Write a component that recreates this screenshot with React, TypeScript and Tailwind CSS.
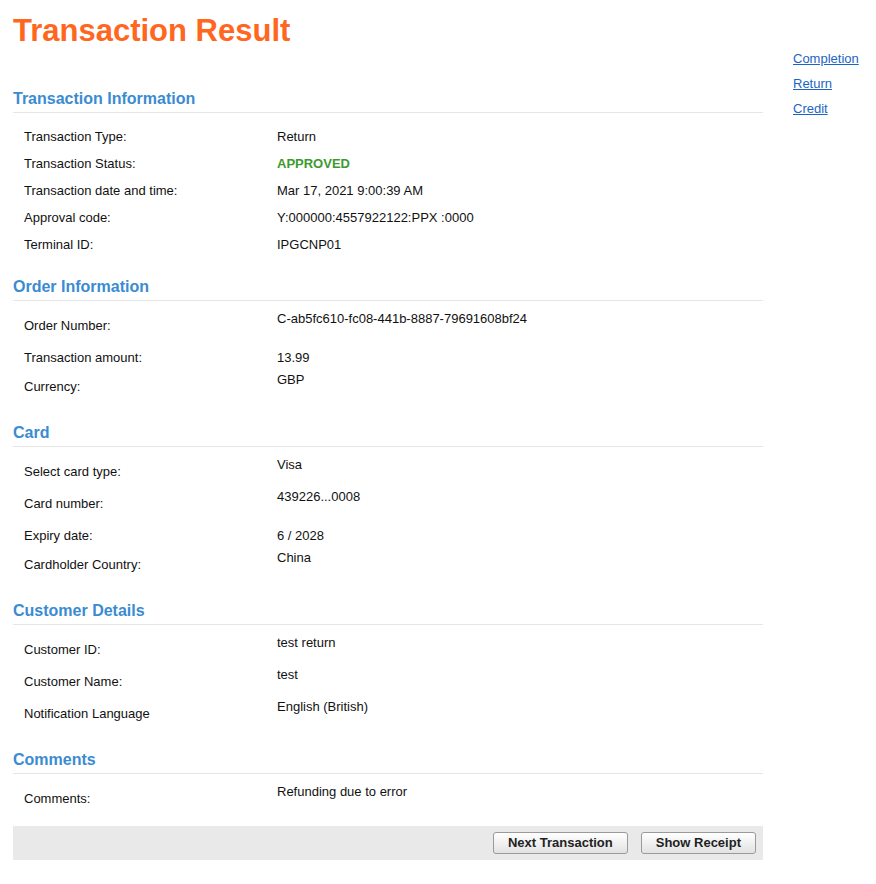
import React from 'react';

type Row = {
  label: string;
  value: string;
  tall?: boolean;
  status?: boolean;
};

interface Section {
  title: string;
  compact?: boolean;
  rows: Row[];
}

const sections: Section[] = [
  {
    title: 'Transaction Information',
    compact: true,
    rows: [
      { label: 'Transaction Type:', value: 'Return' },
      { label: 'Transaction Status:', value: 'APPROVED', status: true },
      { label: 'Transaction date and time:', value: 'Mar 17, 2021 9:00:39 AM' },
      { label: 'Approval code:', value: 'Y:000000:4557922122:PPX :0000' },
      { label: 'Terminal ID:', value: 'IPGCNP01' },
    ],
  },
  {
    title: 'Order Information',
    rows: [
      { label: 'Order Number:', value: 'C-ab5fc610-fc08-441b-8887-79691608bf24', tall: true },
      { label: 'Transaction amount:', value: '13.99' },
      { label: 'Currency:', value: 'GBP', tall: true },
    ],
  },
  {
    title: 'Card',
    rows: [
      { label: 'Select card type:', value: 'Visa', tall: true },
      { label: 'Card number:', value: '439226...0008', tall: true },
      { label: 'Expiry date:', value: '6 / 2028' },
      { label: 'Cardholder Country:', value: 'China', tall: true },
    ],
  },
  {
    title: 'Customer Details',
    rows: [
      { label: 'Customer ID:', value: 'test return', tall: true },
      { label: 'Customer Name:', value: 'test', tall: true },
      { label: 'Notification Language', value: 'English (British)', tall: true },
    ],
  },
  {
    title: 'Comments',
    rows: [{ label: 'Comments:', value: 'Refunding due to error', tall: true }],
  },
];

const DetailRow: React.FC<{ row: Row; compact?: boolean }> = ({ row, compact }) => {
  if (row.tall) {
    return (
      <div className="flex h-[32px] items-start text-[13px] leading-4">
        <div className="w-[264px] pl-[11px] pt-[7px]">{row.label}</div>
        <div>{row.value}</div>
      </div>
    );
  }
  return (
    <div
      className={`flex items-center text-[13px] ${
        compact ? 'h-[27px] leading-[27px]' : 'h-[29px] leading-[29px]'
      }`}
    >
      <div className="w-[264px] pl-[11px]">{row.label}</div>
      <div className={row.status ? 'font-bold text-[#3d9a2f]' : ''}>{row.value}</div>
    </div>
  );
};

export default function App() {
  return (
    <div
      className="flex min-h-[884px] bg-white px-[13px] text-[#111]"
      style={{ fontFamily: '"Liberation Sans", Arial, Helvetica, sans-serif' }}
    >
      {/* Main column */}
      <div className="w-[750px] pt-[13px]">
        <h1 className="text-[31px] font-bold leading-[36px] text-[#ff671f]">Transaction Result</h1>

        <div className="mt-[39px] flex flex-col gap-[18px]">
          {sections.map((section) => (
            <div key={section.title}>
              <h2 className="border-b border-[#e6e6e6] pt-[1px] pb-[3px] text-[16px] font-bold leading-5 text-[#3a8bd2]">
                {section.title}
              </h2>
              <div className="pt-[10px]">
                {section.rows.map((row) => (
                  <DetailRow key={row.label} row={row} compact={section.compact} />
                ))}
              </div>
            </div>
          ))}
        </div>

        {/* Action bar */}
        <div className="mt-[10px] flex h-[34px] items-center justify-end gap-[13px] bg-[#e9e9e9] pr-[7px]">
          <button className="h-[22px] rounded-[3px] border border-[#9a9a9a] bg-gradient-to-b from-white to-[#e2e2e2] px-[14px] text-[13px] font-bold text-[#222]">
            Next Transaction
          </button>
          <button className="h-[22px] rounded-[3px] border border-[#9a9a9a] bg-gradient-to-b from-white to-[#e2e2e2] px-[14px] text-[13px] font-bold text-[#222]">
            Show Receipt
          </button>
        </div>
      </div>

      {/* Side links */}
      <div className="ml-[30px] flex flex-col pt-[46px] text-[13px] leading-[25px]">
        {['Completion', 'Return', 'Credit'].map((link) => (
          <a key={link} href="#" className="text-[#1a66c2] underline">
            {link}
          </a>
        ))}
      </div>
    </div>
  );
}
